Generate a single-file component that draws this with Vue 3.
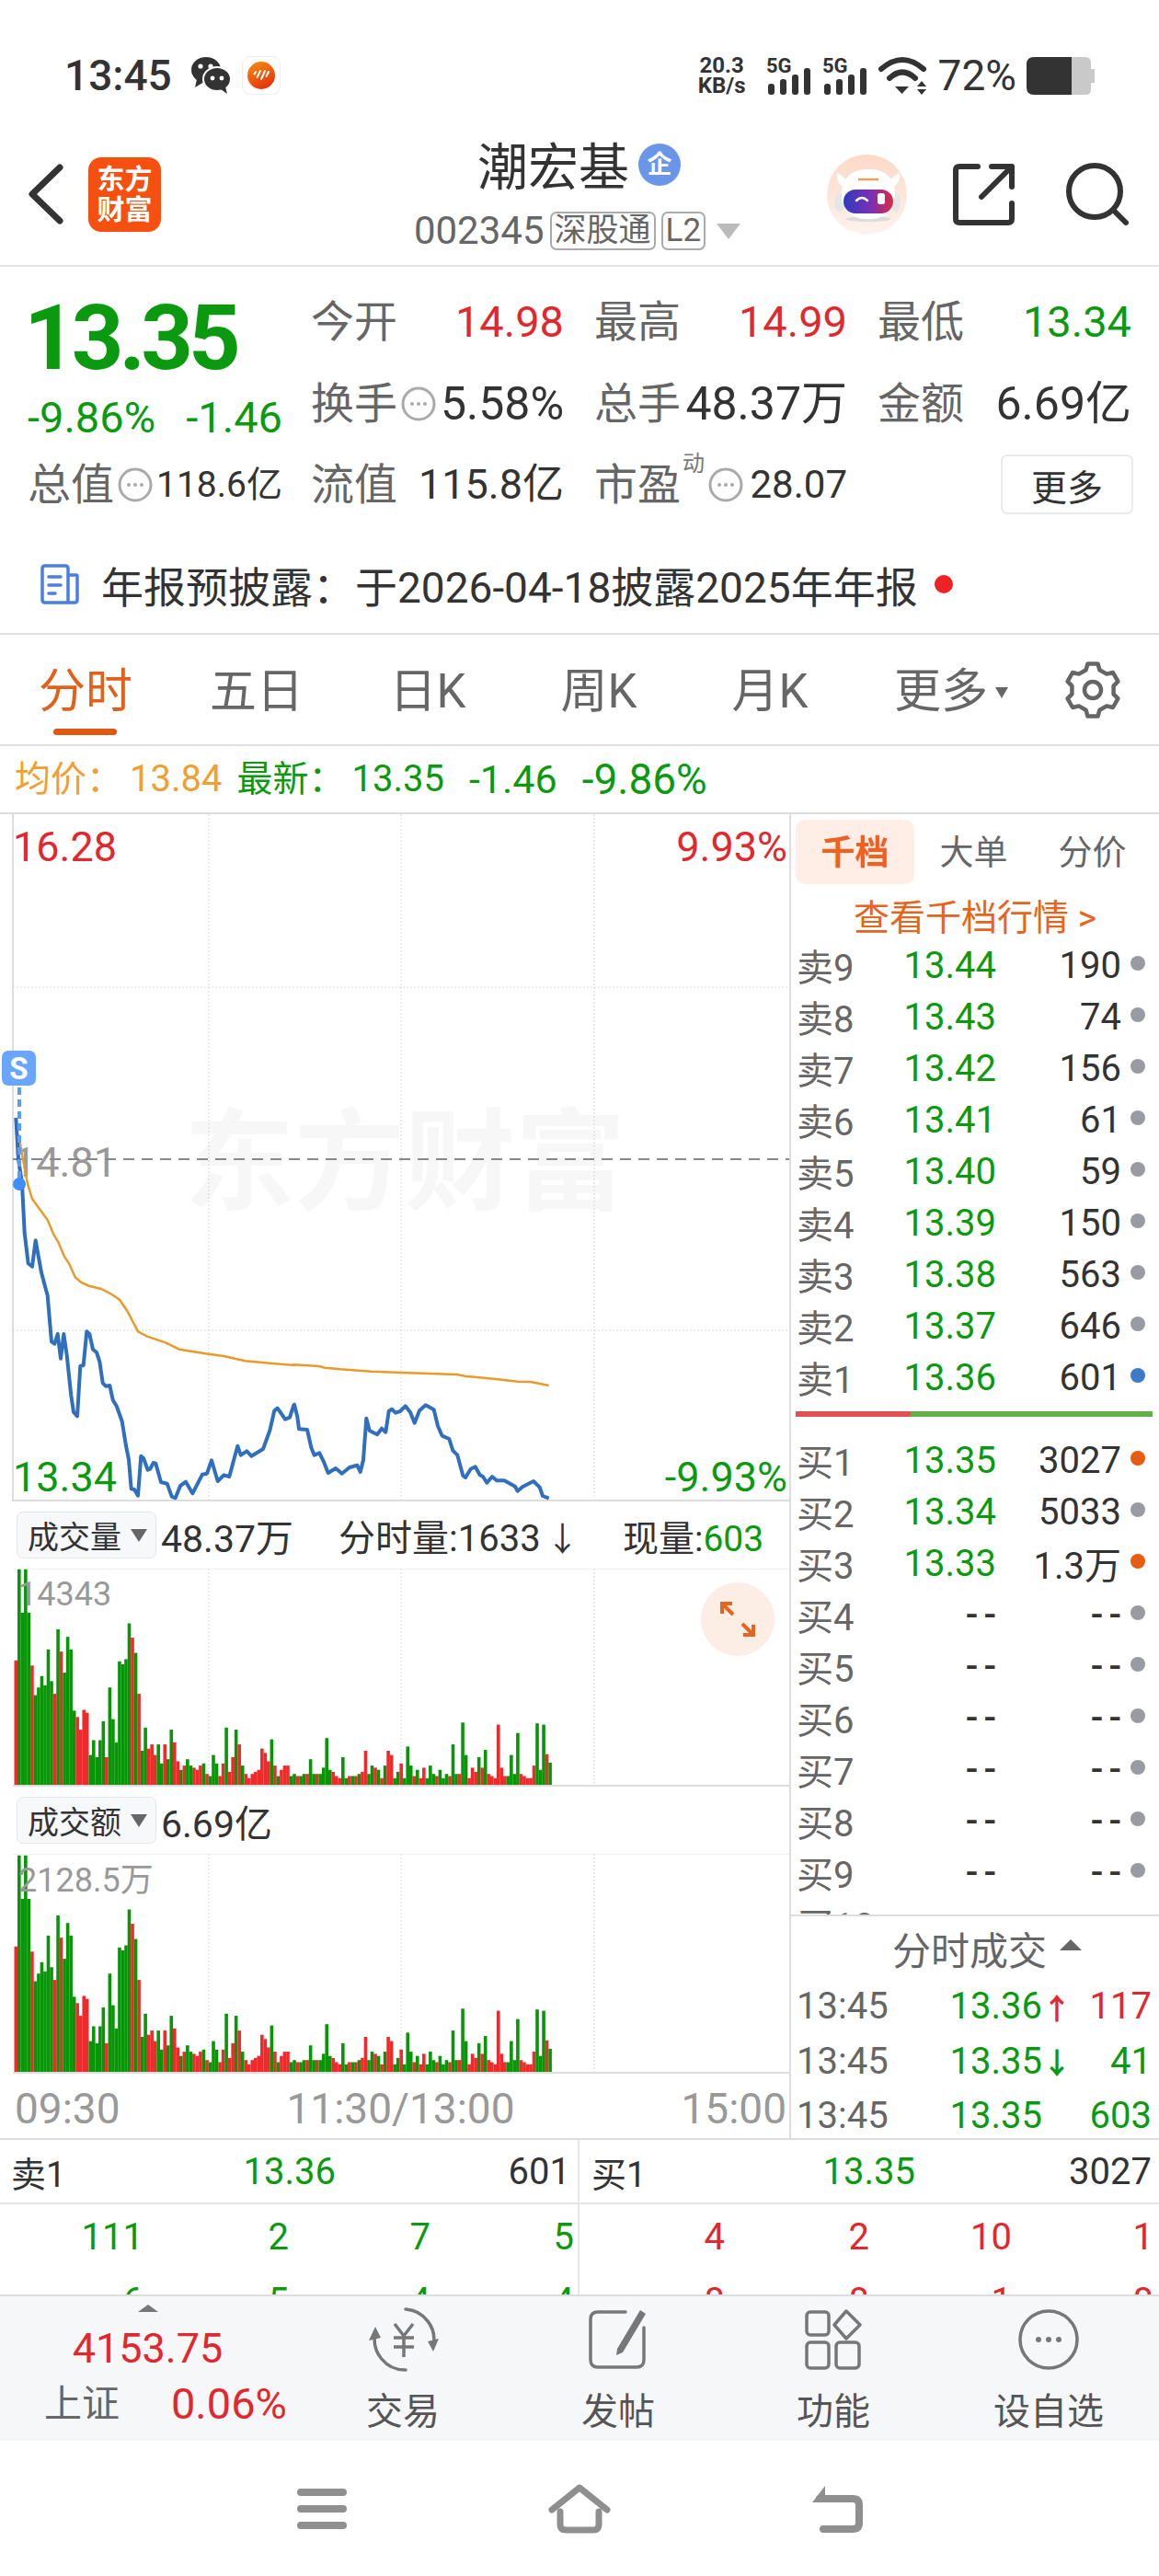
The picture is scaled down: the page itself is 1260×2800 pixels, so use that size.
<template>
  <div class="app">
    <div class="status">
      <span class="status__time">13:45</span>
      <svg class="status__wechat" width="46" height="44" viewBox="0 0 46 44">
        <ellipse cx="17" cy="16" rx="16" ry="14" fill="#333" />
        <path d="M7 26 L5 35 L15 29 Z" fill="#333" />
        <ellipse cx="29" cy="26" rx="15" ry="13" fill="#333" stroke="#fff" stroke-width="2" />
        <path d="M33 37 L40 42 L38 34 Z" fill="#333" />
        <circle cx="11" cy="12" r="2.6" fill="#fff" />
        <circle cx="22" cy="12" r="2.6" fill="#fff" />
        <circle cx="24" cy="25" r="2.4" fill="#fff" />
        <circle cx="34" cy="25" r="2.4" fill="#fff" />
      </svg>
      <span class="status__app">
        <svg width="30" height="30" viewBox="0 0 30 30">
          <defs>
            <linearGradient id="appGrad" x1="0.2" y1="0" x2="0.7" y2="1">
              <stop offset="0" stop-color="#f58a0c" />
              <stop offset="1" stop-color="#e4300f" />
            </linearGradient>
          </defs>
          <circle cx="15" cy="15" r="15" fill="url(#appGrad)" />
          <path d="M9 11 L7.5 13.5 M14 10 L10.5 17 M19 10 L15 19 M23 11 L20.5 16" stroke="#fff" stroke-width="2" stroke-linecap="round" />
        </svg>
      </span>
      <div class="status__right">
        <div class="speed"><span>20.3</span><span>KB/s</span></div>
        <svg v-for="n in 2" :key="n" class="signal" width="50" height="42" viewBox="0 0 50 42">
          <text x="0" y="18" class="signal-text">5G</text>
          <rect x="2" y="30" width="7" height="12" rx="3" fill="#333" />
          <rect x="15" y="25" width="7" height="17" rx="3" fill="#333" />
          <rect x="28" y="20" width="7" height="22" rx="3" fill="#333" />
          <rect x="41" y="13" width="7" height="29" rx="3" fill="#333" />
        </svg>
        <svg width="54" height="42" viewBox="0 0 54 42">
          <path d="M3 14 Q26 -6 49 14" fill="none" stroke="#333" stroke-width="6" stroke-linecap="round" />
          <path d="M12 24 Q26 11 40 24" fill="none" stroke="#333" stroke-width="6" stroke-linecap="round" />
          <path d="M18 33 H33 L25.500 41 Z" fill="#333" />
          <path d="M42 33 L47 27 L52 33 Z M42 36 H52 L47 42 Z" fill="#333" />
        </svg>
        <span class="status__pct">72%</span>
        <svg width="74" height="41" viewBox="0 0 74 41">
          <path d="M49 0 H64 Q70 0 70 6 V13 H74 V28 H70 V35 Q70 41 64 41 H49 Z" fill="#c9c9c9" />
          <path d="M49 0 H8 Q0 0 0 8 V33 Q0 41 8 41 H49 Z" fill="#333" />
        </svg>
      </div>
    </div>

    <div class="header">
      <div class="header__left">
        <svg width="40" height="66" viewBox="0 0 40 66">
          <path d="M35 4 L5 33 L35 62" fill="none" stroke="#333" stroke-width="7" stroke-linecap="round" stroke-linejoin="round" />
        </svg>
        <div class="logo">东方<br />财富</div>
      </div>
      <div class="header__center">
        <div class="title">
          <span>潮宏基</span>
          <span class="title__badge">企</span>
        </div>
        <div class="code">
          <span class="code__num">002345</span>
          <span class="code__tag">深股通</span>
          <span class="code__tag">L2</span>
          <span class="code__arrow"></span>
        </div>
      </div>
      <div class="header__right">
        <svg width="87" height="87" viewBox="0 0 87 87">
          <defs>
            <linearGradient id="avatarBg" x1="0" y1="0" x2="0" y2="1">
              <stop offset="0" stop-color="#fcd9c7" />
              <stop offset="1" stop-color="#fdf3ee" />
            </linearGradient>
            <linearGradient id="visor" x1="0" y1="0" x2="1" y2="0">
              <stop offset="0" stop-color="#2f3cc0" />
              <stop offset="0.55" stop-color="#7a2fb5" />
              <stop offset="1" stop-color="#dc2b42" />
            </linearGradient>
          </defs>
          <circle cx="43.500" cy="43.500" r="43.500" fill="url(#avatarBg)" />
          <path d="M11 19 Q9 32 20 37 L24 29 Z M79 19 Q81 32 70 37 L66 29 Z" fill="#fff" stroke="#ececec" />
          <ellipse cx="14" cy="52" rx="6" ry="10" fill="#e6e6e6" />
          <ellipse cx="75" cy="52" rx="5" ry="10" fill="#e6e6e6" />
          <ellipse cx="45" cy="70" rx="24" ry="3" fill="#dcdcdc" />
          <rect x="16" y="16" width="58" height="54" rx="25" fill="#fff" />
          <path d="M34 27 H56" stroke="#e9a05a" stroke-width="2.500" />
          <rect x="18" y="38" width="54" height="26" rx="13" fill="url(#visor)" />
          <path d="M32 50 Q38 44 44 50" fill="none" stroke="#fff" stroke-width="2.500" stroke-linecap="round" />
          <rect x="55" y="42" width="8" height="12" rx="2.500" fill="#fff" />
        </svg>
        <svg class="icon-share" width="67" height="67" viewBox="0 0 67 67">
          <path d="M27 3 H7 Q3 3 3 7 V60 Q3 64 7 64 H60 Q64 64 64 60 V43 M42 3 H64 V25 M64 3 L31 36" fill="none" stroke="#333" stroke-width="6" stroke-linecap="round" stroke-linejoin="round" />
        </svg>
        <svg width="68" height="70" viewBox="0 0 68 70">
          <circle cx="31" cy="32" r="28" fill="none" stroke="#333" stroke-width="6" />
          <path d="M52 53 L65 66" stroke="#333" stroke-width="6" stroke-linecap="round" />
        </svg>
      </div>
    </div>

    <div class="quote">
      <div class="quote__main">
        <div class="quote__price">13.35</div>
        <div class="quote__change"><span>-9.86%</span><span>-1.46</span></div>
      </div>
      <div class="cell">
        <span class="cell__label">今开</span><span class="cell__val up">14.98</span>
      </div>
      <div class="cell">
        <span class="cell__label">最高</span><span class="cell__val up">14.99</span>
      </div>
      <div class="cell cell--last">
        <span class="cell__label">最低</span><span class="cell__val down">13.34</span>
      </div>
      <div class="cell">
        <span class="cell__label">换手<svg class="info" viewBox="0 0 38 38"><circle cx="19" cy="19" r="17" /><circle class="info__dot" cx="12" cy="19" r="2" /><circle class="info__dot" cx="19" cy="19" r="2" /><circle class="info__dot" cx="26" cy="19" r="2" /></svg></span>
        <span class="cell__val cell__val--lg">5.58%</span>
      </div>
      <div class="cell">
        <span class="cell__label">总手</span><span class="cell__val cell__val--lg">48.37万</span>
      </div>
      <div class="cell cell--last">
        <span class="cell__label">金额</span><span class="cell__val cell__val--lg">6.69亿</span>
      </div>
      <div class="cell cell--first">
        <span class="cell__label">总值<svg class="info" viewBox="0 0 38 38"><circle cx="19" cy="19" r="17" /><circle class="info__dot" cx="12" cy="19" r="2" /><circle class="info__dot" cx="19" cy="19" r="2" /><circle class="info__dot" cx="26" cy="19" r="2" /></svg></span>
        <span class="cell__val cell__val--sm">118.6亿</span>
      </div>
      <div class="cell">
        <span class="cell__label">流值</span><span class="cell__val cell__val--md">115.8亿</span>
      </div>
      <div class="cell">
        <span class="cell__label">市盈<sup class="cell__sup">动</sup><svg class="info" viewBox="0 0 38 38"><circle cx="19" cy="19" r="17" /><circle class="info__dot" cx="12" cy="19" r="2" /><circle class="info__dot" cx="19" cy="19" r="2" /><circle class="info__dot" cx="26" cy="19" r="2" /></svg></span>
        <span class="cell__val cell__val--pe">28.07</span>
      </div>
      <div class="cell cell--last cell--btn"><span class="more-btn">更多</span></div>
    </div>

    <div class="notice">
      <svg width="42" height="44" viewBox="0 0 42 44">
        <path d="M30 12 H39 Q40 12 40 14 V39 Q40 42 37 42 H5 Q2 42 2 39 V5 Q2 2 5 2 H27 Q30 2 30 5 V42" fill="none" stroke="#4a7ee0" stroke-width="3.500" />
        <path d="M9 14 H22 M9 23 H22 M9 32 H16" stroke="#4a7ee0" stroke-width="3.500" stroke-linecap="round" />
      </svg>
      <span class="notice__text">年报预披露：于2026-04-18披露2025年年报</span>
      <span class="notice__dot"></span>
    </div>

    <div class="tabs">
      <span v-for="(t, i) in tabs" :key="t" class="tab" :class="{ 'tab--active': i === 0 }">{{ t }}</span>
      <span class="tab">更多<i class="tab__arrow"></i></span>
      <svg class="gear" width="60" height="62" viewBox="0 0 60 62">
        <path :d="gearPath" fill="none" stroke="#666" stroke-width="4.500" stroke-linejoin="round" />
        <circle cx="30" cy="31" r="9" fill="none" stroke="#666" stroke-width="4.500" />
      </svg>
    </div>

    <div class="latest">
      <span class="latest__avg">均价：</span><span class="latest__avg latest__num">13.84</span>
      <span class="latest__item latest__head">最新：</span><span class="latest__item latest__num">13.35</span>
      <span class="latest__item latest__gap">-1.46</span>
      <span class="latest__item latest__gap latest__pct">-9.86%</span>
    </div>

    <div class="board">
      <div class="board__left">
        <svg class="chart" width="858" height="747" viewBox="0 885 858 747">
          <text x="200" y="1306" class="watermark">东方财富</text>
          <path v-for="x in gridX" :key="x" :d="`M${x} 885 V1632`" class="grid" />
          <path d="M14 1073 H858 M14 1446 H858" class="grid" />
          <path d="M14 885 V1632" class="axis" />
          <path d="M14 1631 H858" class="axis" />
          <text x="14" y="936" class="label up-fill">16.28</text>
          <text x="856" y="936" class="label label--end up-fill">9.93%</text>
          <text x="14" y="1279" class="label label--grey">14.81</text>
          <text x="14" y="1621" class="label down-fill">13.34</text>
          <text x="856" y="1621" class="label label--end down-fill">-9.93%</text>
          <path d="M14 1260 H858" class="mid" />
          <polyline :points="avgLine" class="line-avg" />
          <polyline :points="priceLine" class="line-price" />
          <path d="M21 1182 V1287" class="marker-line" />
          <circle cx="21" cy="1287" r="7" class="marker-dot" />
          <rect x="2" y="1142" width="37" height="38" rx="7" class="marker-dot marker-box" />
          <text x="20.500" y="1173" class="marker-s">S</text>
        </svg>

        <div class="vol-head">
          <span class="select">成交量<i class="select__arrow"></i></span>
          <span class="vol-head__val">48.37万</span>
          <span class="vol-head__fen">分时量:1633<i class="vol-head__dir">↓</i></span>
          <span class="vol-head__now">现量:<em>603</em></span>
        </div>
        <svg class="chart" width="858" height="237" viewBox="0 1705 858 237">
          <path v-for="x in gridX" :key="x" :d="`M${x} 1705 V1942`" class="grid" />
          <path d="M14 1705 H858" class="hair" />
          <rect v-for="b in bars" :key="b.x" :x="b.x" :y="1942 - b.h" width="3.600" :height="b.h" :fill="b.c" />
          <path d="M14 1941 H858" class="axis" />
          <text x="20" y="1745" class="small-label">14343</text>
          <circle cx="802" cy="1760" r="40" fill="#fdeee5" />
          <path d="M785 1754 V1743 H796 M785 1743 L797 1755 M819 1766 V1777 H808 M819 1777 L807 1765" fill="none" stroke="#e4651f" stroke-width="4" />
        </svg>

        <div class="vol-head">
          <span class="select">成交额<i class="select__arrow"></i></span>
          <span class="vol-head__val">6.69亿</span>
        </div>
        <svg class="chart" width="858" height="239" viewBox="0 2015 858 239">
          <path v-for="x in gridX" :key="x" :d="`M${x} 2015 V2253`" class="grid" />
          <path d="M14 2015 H858" class="hair" />
          <rect v-for="b in bars" :key="b.x" :x="b.x" :y="2253 - b.h" width="3.600" :height="b.h" :fill="b.c" />
          <path d="M14 2253 H858" class="axis" />
          <text x="20" y="2056" class="small-label">2128.5万</text>
        </svg>

        <div class="times"><span>09:30</span><span>11:30/13:00</span><span>15:00</span></div>
      </div>

      <div class="board__right">
        <div class="book">
          <div class="book__tabs">
            <span class="book__tab book__tab--active">千档</span>
            <span class="book__tab">大单</span>
            <span class="book__tab">分价</span>
          </div>
          <div class="book__link">查看千档行情 &gt;</div>
          <div v-for="r in asks" :key="r.label" class="level">
            <span class="level__label">{{ r.label }}</span>
            <span class="level__price" :class="{ 'level__empty': r.price === '--' }">{{ r.price }}</span>
            <span class="level__qty" :class="{ 'level__empty': r.qty === '--' }">{{ r.qty }}</span>
            <i class="level__dot" :class="r.dot"></i>
          </div>
          <div class="ratio"></div>
          <div v-for="r in bids" :key="r.label" class="level">
            <span class="level__label">{{ r.label }}</span>
            <span class="level__price" :class="{ 'level__empty': r.price === '--' }">{{ r.price }}</span>
            <span class="level__qty" :class="{ 'level__empty': r.qty === '--' }">{{ r.qty }}</span>
            <i class="level__dot" :class="r.dot"></i>
          </div>
        </div>
        <div class="trades">
          <div class="trades__title">分时成交<i class="trades__arrow"></i></div>
          <div v-for="(t, i) in trades" :key="i" class="trade">
            <span class="trade__time">13:45</span>
            <span class="trade__price">{{ t.price }}</span>
            <span class="trade__dir" :class="t.cls">{{ t.dir }}</span>
            <span class="trade__qty" :class="t.cls">{{ t.qty }}</span>
          </div>
        </div>
      </div>
    </div>

    <div class="detail">
      <div class="detail__side">
        <div class="detail__top">
          <span>卖1</span><span class="down">13.36</span><span>601</span>
        </div>
        <div v-for="(row, i) in sellRows" :key="i" class="detail__row down">
          <span v-for="(n, j) in row" :key="j">{{ n }}</span>
        </div>
      </div>
      <div class="detail__side detail__side--right">
        <div class="detail__top">
          <span>买1</span><span class="down">13.35</span><span>3027</span>
        </div>
        <div v-for="(row, i) in buyRows" :key="i" class="detail__row up">
          <span v-for="(n, j) in row" :key="j">{{ n }}</span>
        </div>
      </div>
    </div>

    <div class="dock">
      <div class="index">
        <i class="index__arrow"></i>
        <span class="index__val">4153.75</span>
        <div class="index__sub"><span>上证</span><span class="up">0.06%</span></div>
      </div>
      <div class="dock__item">
        <svg width="82" height="70" viewBox="0 0 82 70">
          <path d="M44 2 A33 33 0 0 1 74 42 M44 68 A33 33 0 0 1 11 28" fill="none" stroke="#777" stroke-width="3.500" stroke-linecap="round" />
          <path d="M74 48 L80 34 L68 37 Z M11 21 L4 36 L17 33 Z" fill="#777" />
          <path d="M32 18 L42 31 L52 18 M42 31 V54 M31 33 H53 M31 43 H53" fill="none" stroke="#777" stroke-width="3.500" />
        </svg>
        <span>交易</span>
      </div>
      <div class="dock__item">
        <svg width="66" height="70" viewBox="0 0 66 70">
          <path d="M41 5 H11 Q3 5 3 13 V57 Q3 65 11 65 H53 Q61 65 61 57 V22" fill="none" stroke="#777" stroke-width="3.500" stroke-linecap="round" />
          <path d="M57 3 L63 7 L38 49 L31 52 L32 45 Z" fill="#777" />
        </svg>
        <span>发帖</span>
      </div>
      <div class="dock__item">
        <svg width="62" height="70" viewBox="0 0 62 70">
          <g fill="none" stroke="#777" stroke-width="3.500">
            <rect x="2" y="5" width="24" height="25" rx="4" />
            <path d="M45 4 L60 19 L45 34 L32 19 Z" stroke-linejoin="round" />
            <rect x="2" y="38" width="24" height="28" rx="4" />
            <rect x="34" y="38" width="25" height="28" rx="4" />
          </g>
        </svg>
        <span>功能</span>
      </div>
      <div class="dock__item">
        <svg width="66" height="70" viewBox="0 0 66 70">
          <circle cx="33" cy="35" r="31" fill="none" stroke="#777" stroke-width="3.500" />
          <circle cx="22" cy="35" r="3" fill="#777" />
          <circle cx="33" cy="35" r="3" fill="#777" />
          <circle cx="44" cy="35" r="3" fill="#777" />
        </svg>
        <span>设自选</span>
      </div>
    </div>

    <div class="nav">
      <svg width="54" height="44" viewBox="0 0 54 44">
        <path d="M4 4 H50 M4 22 H50 M4 40 H50" stroke="#8f8f8f" stroke-width="8" stroke-linecap="round" />
      </svg>
      <svg width="68" height="54" viewBox="0 0 68 54">
        <path d="M4 28 L34 4 L64 28 M13 30 V44 Q13 50 19 50 H49 Q55 50 55 44 V30" fill="none" stroke="#8f8f8f" stroke-width="7" stroke-linecap="round" stroke-linejoin="round" />
      </svg>
      <svg width="58" height="54" viewBox="0 0 58 54">
        <path d="M10 16 H46 Q53 16 53 23 V42 Q53 49 46 49 H14" fill="none" stroke="#8f8f8f" stroke-width="8" stroke-linecap="round" />
        <path d="M16 2 V20 H2 Z" fill="#8f8f8f" />
      </svg>
    </div>
  </div>
</template>

<script setup>
const tabs = ['分时', '五日', '日K', '周K', '月K']
const gridX = [227, 436, 646]

// 折线坐标是从截图量出来的，z8 / z9 是两段放大区域的原始读数
const z8 = [
  [52, 285], [60, 420], [72, 500], [80, 660], [92, 760], [105, 770], [116, 685], [135, 790], [155, 865],
  [168, 1015], [178, 1022], [188, 990], [198, 1070], [208, 990], [218, 1060], [232, 1190], [240, 1245],
  [252, 1258], [262, 1095], [272, 1092], [283, 982], [292, 990], [303, 1040], [315, 1050], [325, 1080],
  [335, 1150], [345, 1160], [358, 1158], [368, 1205], [380, 1225], [398, 1275], [410, 1350], [420, 1400],
  [428, 1495], [438, 1497], [450, 1517], [460, 1388], [468, 1395], [482, 1433], [490, 1430], [500, 1410],
  [508, 1412], [525, 1473], [545, 1478], [560, 1520], [572, 1525], [588, 1485], [606, 1472], [628, 1510],
  [660, 1448], [675, 1445], [690, 1402], [710, 1470], [730, 1450], [748, 1455], [775, 1355], [785, 1385],
  [805, 1372], [820, 1388], [858, 1365], [880, 1305], [895, 1240], [905, 1232], [930, 1268], [945, 1262],
  [958, 1222],
]
const z9 = [
  [0, 380], [10, 420], [15, 460], [42, 462], [55, 520], [65, 545], [82, 538], [95, 565], [110, 603],
  [135, 588], [155, 605], [180, 585], [205, 578], [215, 600], [225, 560], [235, 425], [245, 465], [270, 478],
  [285, 458], [298, 470], [308, 402], [318, 395], [330, 407], [345, 402], [362, 385], [378, 405], [392, 440],
  [408, 400], [428, 382], [455, 397], [468, 450], [482, 482], [505, 492], [517, 530], [532, 545], [550, 612],
  [558, 618], [575, 590], [590, 583], [605, 610], [615, 615], [628, 635], [645, 615], [660, 628], [685, 628],
  [720, 647], [728, 662], [745, 648], [780, 630], [800, 650], [810, 678], [830, 686],
]
const avg8 = [
  [60, 340], [75, 420], [90, 500], [105, 550], [120, 570], [155, 618], [175, 665], [190, 690], [210, 738],
  [225, 760], [245, 805], [265, 822], [290, 833], [330, 843], [360, 858], [390, 878], [415, 915], [450, 982],
  [480, 998], [540, 1018], [585, 1040], [680, 1055], [730, 1062], [800, 1078], [880, 1085], [960, 1092],
]
const avg9 = [
  [0, 250], [80, 255], [100, 260], [150, 265], [250, 272], [350, 276], [530, 282], [560, 288], [650, 296],
  [730, 305], [770, 306], [830, 318],
]

const toPoints = (list8, list9) =>
  [
    ...list8.map(([x, y]) => `${(x / 3).toFixed(1)},${(1120 + y / 3).toFixed(1)}`),
    ...list9.map(([x, y]) => `${(320 + x / 3).toFixed(1)},${(1400 + y / 3).toFixed(1)}`),
  ].join(' ')

const priceLine = toPoints(z8, z9)
const avgLine = toPoints(avg8, avg9)

// 正数绿柱，负数红柱
const volumes = [
  -299, 515, 412, 515, 412, -287, 217, 235, 262, 240, 325, 250, -220, 373, -320, 270, 355, 325, 180, -165,
  -135, -182, -175, 75, 110, 70, 110, 155, -70, 235, 160, 105, 297, 290, 302, 387, -353, 317, -220, 85,
  140, -90, -100, -75, 100, 55, -100, 65, 135, -105, -60, 40, -50, 65, 50, -45, -40, -50, 55, -30,
  25, 75, 55, -25, -55, 140, -35, -70, 135, -100, 50, -30, -20, -30, -35, -40, -90, -80, -60, 112,
  -50, 25, -40, -50, -50, 25, 30, -25, 25, 30, -30, 65, 30, -30, 30, 45, 115, 40, -35, -25,
  -20, 70, 20, -25, 25, -25, 30, -35, -85, 30, 50, -45, 40, -20, 50, -85, -75, 20, 35, -55,
  20, 95, 50, -25, 40, -20, -45, 20, 50, 30, -25, 40, 20, 30, -25, 100, 30, -30, 152, 75,
  -20, -45, -35, 70, -45, 87, -30, -25, -20, -147, -45, -25, 25, 75, 30, 127, -30, -25, -20, -20,
  -50, 150, 40, 147, -77, 57,
]
const bars = volumes.map((v, i) => ({
  x: +(15.5 + i * 3.52).toFixed(2),
  h: +(Math.abs(v) / 2.18).toFixed(1),
  c: v > 0 ? '#089608' : '#ee2a2a',
}))

const gearPath = (() => {
  const pts = []
  for (let i = 0; i < 6; i++) {
    const a = -90 + i * 60
    for (const [off, r] of [[-19, 23], [-11, 29], [11, 29], [19, 23]]) {
      const rad = ((a + off) * Math.PI) / 180
      pts.push(`${(30 + r * Math.cos(rad)).toFixed(1)} ${(31 + r * Math.sin(rad)).toFixed(1)}`)
    }
  }
  return `M${pts.join(' L')} Z`
})()

const asks = [
  ['卖9', '13.44', '190'],
  ['卖8', '13.43', '74'],
  ['卖7', '13.42', '156'],
  ['卖6', '13.41', '61'],
  ['卖5', '13.40', '59'],
  ['卖4', '13.39', '150'],
  ['卖3', '13.38', '563'],
  ['卖2', '13.37', '646'],
  ['卖1', '13.36', '601', 'level__dot--blue'],
].map(([label, price, qty, dot]) => ({ label, price, qty, dot }))

const bids = [
  ['买1', '13.35', '3027', 'level__dot--orange'],
  ['买2', '13.34', '5033'],
  ['买3', '13.33', '1.3万', 'level__dot--orange'],
  ['买4', '--', '--'],
  ['买5', '--', '--'],
  ['买6', '--', '--'],
  ['买7', '--', '--'],
  ['买8', '--', '--'],
  ['买9', '--', '--'],
  ['买10', '--', '--'],
].map(([label, price, qty, dot]) => ({ label, price, qty, dot }))

const trades = [
  { price: '13.36', dir: '↑', qty: '117', cls: 'up' },
  { price: '13.35', dir: '↓', qty: '41', cls: 'down' },
  { price: '13.35', dir: '', qty: '603', cls: 'down' },
]

const sellRows = [
  [111, 2, 7, 5],
  [6, 5, 4, 4],
]
const buyRows = [
  [4, 2, 10, 1],
  [8, 8, 1, 8],
]
</script>

<style>
html,
body {
  margin: 0;
  background: #fff;
}
</style>

<style scoped>
.app {
  width: 1260px;
  height: 2800px;
  overflow: hidden;
  background: #fff;
  color: #333;
  font-family: Roboto, 'Noto Sans CJK SC', sans-serif;
}
.up {
  color: #e0282e;
}
.down {
  color: #0b9a0f;
}

/* 状态栏 */
.status {
  display: flex;
  align-items: center;
  height: 44px;
  padding: 60px 70px 36px 70px;
}
.status__time {
  font-size: 46px;
  font-weight: 500;
  line-height: 44px;
  width: 137px;
}
.status__app {
  display: flex;
  align-items: center;
  justify-content: center;
  width: 40px;
  height: 40px;
  margin-left: 10px;
  border: 1px solid #eee;
  border-radius: 9px;
}
.status__right {
  display: flex;
  align-items: center;
  gap: 11px;
  margin-left: auto;
}
.speed {
  display: flex;
  flex-direction: column;
  align-items: center;
  width: 54px;
  margin-right: 10px;
  font-size: 24px;
  font-weight: 700;
  line-height: 22px;
}
.signal {
  overflow: visible;
}
.signal-text {
  font-size: 22px;
  font-weight: 700;
  fill: #333;
}
.status__pct {
  font-size: 46px;
  line-height: 44px;
}

/* 标题栏 */
.header {
  display: grid;
  grid-template-columns: 447px 361px 1fr;
  height: 150px;
  box-sizing: border-box;
  border-bottom: 2px solid #e4e4e4;
}
.header__left {
  display: flex;
  align-items: center;
  gap: 26px;
  padding: 0 0 6px 30px;
}
.logo {
  width: 79px;
  height: 81px;
  box-sizing: border-box;
  padding-top: 7px;
  background: #f5500f;
  border-radius: 14px;
  color: #fff;
  font-size: 30px;
  font-weight: 700;
  line-height: 33px;
  text-align: center;
}
.header__center {
  display: flex;
  flex-direction: column;
  align-items: center;
  padding-top: 15px;
}
.title {
  display: flex;
  align-items: center;
  gap: 10px;
  height: 54px;
  margin-left: 4px;
  color: #333;
  font-size: 55px;
  line-height: 54px;
}
.title__badge {
  display: flex;
  align-items: center;
  justify-content: center;
  width: 46px;
  height: 46px;
  margin-top: -6px;
  background: #6a96ea;
  border-radius: 50%;
  color: #fff;
  font-size: 27px;
  font-weight: 700;
  line-height: 1;
}
.code {
  display: flex;
  align-items: center;
  gap: 6px;
  margin-top: 21px;
  height: 42px;
  white-space: nowrap;
}
.code > span {
  flex: none;
}
.code__num {
  color: #666;
  font-size: 42px;
  line-height: 42px;
}
.code__tag {
  padding: 0 3px;
  border: 2px solid #aaa;
  border-radius: 7px;
  color: #666;
  font-size: 35px;
  line-height: 38px;
}
.code__arrow {
  width: 0;
  height: 0;
  margin-left: 6px;
  border-top: 17px solid #bbb;
  border-left: 13px solid transparent;
  border-right: 13px solid transparent;
}
.header__right {
  display: flex;
  align-items: center;
  justify-content: flex-end;
  padding: 0 33px 6px 0;
  gap: 50px;
}
.header__right svg:nth-child(3) {
  margin-left: 6px;
}

/* 行情 */
.quote {
  display: grid;
  grid-template-columns: 308px 308px 308px 276px;
  grid-template-rows: 90px 88px 87px;
  padding: 15px 30px 0;
}
.quote__main {
  grid-row: span 2;
}
.quote__price {
  margin: 12px 0 0 -4px;
  color: #0b9a0f;
  font-size: 99px;
  font-weight: 700;
  letter-spacing: -5px;
  line-height: 100px;
}
.quote__change {
  display: flex;
  justify-content: space-between;
  width: 277px;
  margin-top: 12px;
  color: #0b9a0f;
  font-size: 47px;
  line-height: 50px;
}
.cell {
  display: flex;
  align-items: center;
  justify-content: space-between;
  padding-right: 33px;
}
.cell--first {
  padding-right: 31px;
}
.cell--last {
  padding-right: 0;
}
.cell--btn {
  justify-content: flex-end;
}
.cell__label {
  display: flex;
  align-items: center;
  color: #666;
  font-size: 47px;
  line-height: 56px;
  position: relative;
  white-space: nowrap;
}
.cell__sup {
  position: absolute;
  left: 96px;
  top: -8px;
  color: #777;
  font-size: 24px;
  line-height: 26px;
}
.cell__val {
  color: #333;
  font-size: 47px;
  line-height: 56px;
  white-space: nowrap;
}
.cell__val--lg {
  font-size: 50px;
}
.cell__val--md {
  font-size: 45px;
}
.cell__val--pe {
  font-size: 42px;
}
.cell__val--sm {
  font-size: 39px;
}
.cell__val.up {
  color: #e0282e;
}
.cell__val.down {
  color: #0b9a0f;
}
.info {
  width: 38px;
  height: 38px;
  margin-left: 4px;
  fill: none;
  stroke: #aaa;
  stroke-width: 3;
}
.cell__sup + .info {
  margin-left: 30px;
}
.info__dot {
  fill: #aaa;
  stroke: none;
}
.more-btn {
  display: flex;
  align-items: center;
  justify-content: center;
  width: 144px;
  height: 65px;
  box-sizing: border-box;
  margin-right: -2px;
  border: 2px solid #eaeaea;
  border-radius: 7px;
  color: #333;
  font-size: 39px;
}
.notice {
  display: flex;
  align-items: center;
  height: 120px;
  box-sizing: border-box;
  padding: 12px 0 0 44px;
  border-bottom: 2px solid #e0e0e0;
}
.notice__text {
  margin-left: 24px;
  color: #333;
  font-size: 46px;
  white-space: nowrap;
}
.notice__dot {
  width: 20px;
  height: 20px;
  margin-left: 18px;
  background: #ee2222;
  border-radius: 50%;
}

/* 周期 tab */
.tabs {
  display: grid;
  grid-template-columns: repeat(6, 186px) 144px;
  align-items: center;
  height: 121px;
  box-sizing: border-box;
  padding-top: 4px;
  border-bottom: 2px solid #e0e0e0;
}
.tab {
  position: relative;
  color: #666;
  font-size: 51px;
  line-height: 60px;
  text-align: center;
}
.tab--active {
  color: #e2601a;
}
.tab--active::after {
  content: '';
  position: absolute;
  left: 58px;
  right: 59px;
  bottom: -17px;
  height: 7px;
  background: #e0580f;
  border-radius: 4px;
}
.tab__arrow {
  display: inline-block;
  width: 0;
  height: 0;
  margin: 0 -22px 0 8px;
  vertical-align: 10px;
  border-top: 12px solid #666;
  border-left: 7px solid transparent;
  border-right: 7px solid transparent;
}
.gear {
  justify-self: center;
  margin-top: -4px;
}
.latest {
  display: flex;
  align-items: center;
  height: 72px;
  box-sizing: border-box;
  padding-left: 16px;
  font-size: 39px;
  line-height: 72px;
}
.latest__avg {
  color: #f0a030;
}
.latest__item {
  color: #0b9a0f;
}
.latest__num {
  margin-left: 8px;
  font-size: 40px;
}
.latest__head {
  margin-left: 16px;
}
.latest__gap {
  margin-left: 27px;
  font-size: 43px;
}
.latest__pct {
  font-size: 46px;
}

/* 图表区 */
.board {
  display: flex;
  height: 1443px;
  border-top: 2px solid #ddd;
  border-bottom: 2px solid #ddd;
  box-sizing: border-box;
}
.board__left {
  width: 860px;
  box-sizing: border-box;
  border-right: 2px solid #ddd;
}
.board__right {
  width: 400px;
}
.chart {
  display: block;
}
.watermark {
  fill: #f7f7f7;
  font-size: 120px;
  font-weight: 700;
}
.grid {
  fill: none;
  stroke: #d8d8d8;
  stroke-width: 1;
  stroke-dasharray: 2 2;
}
.axis {
  stroke: #ddd;
  stroke-width: 2;
}
.hair {
  stroke: #e4e4e4;
  stroke-width: 1;
}
.mid {
  stroke: #888;
  stroke-width: 2;
  stroke-dasharray: 12 8;
}
.label {
  font-size: 45px;
}
.label--end {
  text-anchor: end;
}
.label--grey {
  fill: #999;
}
.up-fill {
  fill: #e0282e;
}
.down-fill {
  fill: #0b9a0f;
}
.line-avg {
  fill: none;
  stroke: #ea9a2a;
  stroke-width: 2.500;
}
.line-price {
  fill: none;
  stroke: #2f6fbd;
  stroke-width: 4;
  stroke-linejoin: round;
}
.marker-line {
  stroke: #5b9cf0;
  stroke-width: 4;
  stroke-dasharray: 8 5;
}
.marker-dot {
  fill: #3f8ef7;
}
.marker-box {
  fill: #6aa6ff;
}
.marker-s {
  fill: #fff;
  font-size: 33px;
  font-weight: 700;
  text-anchor: middle;
}
.small-label {
  fill: #999;
  font-size: 36px;
}
.vol-head {
  display: flex;
  align-items: center;
  height: 73px;
  box-sizing: border-box;
  padding: 0 18px;
  color: #333;
  font-size: 41px;
}
.select {
  display: flex;
  align-items: center;
  width: 152px;
  height: 51px;
  box-sizing: border-box;
  padding-left: 11px;
  background: #f7f8fa;
  border: 1px solid #e6e6e6;
  border-radius: 7px;
  font-size: 34px;
  white-space: nowrap;
}
.select__arrow {
  width: 0;
  height: 0;
  margin-left: 10px;
  border-top: 14px solid #666;
  border-left: 9px solid transparent;
  border-right: 9px solid transparent;
}
.vol-head__val {
  margin-left: 5px;
  width: 193px;
}
.vol-head__fen {
  width: 309px;
  font-size: 40px;
  white-space: nowrap;
}
.vol-head__dir {
  margin-left: 6px;
  font-size: 36px;
  font-style: normal;
}
.vol-head__now {
  font-size: 39px;
  white-space: nowrap;
}
.vol-head__now em {
  color: #0b9a0f;
  font-style: normal;
}
.times {
  display: flex;
  align-items: center;
  justify-content: space-between;
  height: 70px;
  padding: 6px 3px 0 16px;
  box-sizing: border-box;
  color: #999;
  font-size: 46px;
}

/* 千档 */
.book {
  height: 1196px;
  overflow: hidden;
}
.book__tabs {
  display: grid;
  grid-template-columns: repeat(3, 129px);
  padding: 6px 0 0 5px;
}
.book__tab {
  height: 70px;
  color: #666;
  font-size: 37px;
  line-height: 74px;
  text-align: center;
}
.book__tab--active {
  background: #ffeee6;
  border-radius: 10px;
  color: #f0601f;
  font-weight: 700;
}
.book__link {
  height: 44px;
  padding-top: 15px;
  color: #e6651e;
  font-size: 39px;
  line-height: 44px;
  text-align: center;
  white-space: pre;
}
.level {
  display: grid;
  grid-template-columns: 72px 145px 136px 26px;
  align-items: center;
  height: 56px;
  padding-left: 6px;
  white-space: nowrap;
}
.level__label {
  color: #666;
  font-size: 40px;
}
.level__price {
  color: #0b9a0f;
  font-size: 40px;
  text-align: right;
}
.level__qty {
  color: #333;
  font-size: 40px;
  text-align: right;
}
.level__empty {
  color: #333;
  font-weight: 500;
  letter-spacing: 6px;
  margin-right: -6px;
}
.level__dot {
  justify-self: end;
  width: 16px;
  height: 16px;
  margin-top: -4px;
  background: #9a9aa2;
  border-radius: 50%;
}
.level__dot--blue {
  background: #3b7cc9;
}
.level__dot--orange {
  background: #e85c10;
}
.ratio {
  height: 6px;
  margin: 10px 7px 18px 5px;
  background: linear-gradient(100deg, #e25050 32%, #62b04a 32.500%);
}

/* 分时成交 */
.trades {
  border-top: 2px solid #ddd;
}
.trades__title {
  display: flex;
  align-items: center;
  justify-content: center;
  gap: 14px;
  height: 68px;
  padding-left: 26px;
  color: #666;
  font-size: 42px;
}
.trades__arrow {
  width: 0;
  height: 0;
  margin-bottom: 6px;
  border-bottom: 12px solid #666;
  border-left: 12px solid transparent;
  border-right: 12px solid transparent;
}
.trade {
  display: grid;
  grid-template-columns: 130px 137px 23px 96px;
  align-items: center;
  height: 59.500px;
  padding-left: 6px;
  font-size: 40px;
  white-space: nowrap;
}
.trade__time {
  color: #666;
}
.trade__price {
  color: #0b9a0f;
  text-align: right;
}
.trade__dir {
  font-size: 32px;
  font-weight: 700;
  text-align: center;
}
.trade__qty {
  text-align: right;
}

/* 买一卖一明细 */
.detail {
  display: grid;
  grid-template-columns: 630px 630px;
  height: 168px;
  overflow: hidden;
}
.detail__side {
  box-sizing: border-box;
  border-right: 2px solid #e6e6e6;
}
.detail__side--right {
  border-right: none;
}
.detail__top {
  display: grid;
  grid-template-columns: 60px 293px 255px;
  align-items: center;
  height: 68px;
  padding-left: 12px;
  border-bottom: 2px solid #e4e4e4;
  font-size: 40px;
  white-space: nowrap;
}
.detail__top span:first-child {
  font-size: 38px;
}
.detail__side--right .detail__top {
  grid-template-columns: 60px 292px 257px;
  padding-left: 13px;
}
.detail__top span + span,
.detail__row span {
  text-align: right;
}
.detail__row {
  display: grid;
  grid-template-columns: 156px 158px 154px 156px;
  align-items: center;
  height: 70px;
  font-size: 40px;
}
.detail__side--right .detail__row {
  grid-template-columns: 158px 157px 155px 154px;
}

/* 底部操作栏 */
.dock {
  display: grid;
  grid-template-columns: 321px repeat(4, 234px);
  height: 159px;
  box-sizing: border-box;
  background: #f6f7f9;
  border-top: 2px solid #ddd;
}
.index {
  display: flex;
  flex-direction: column;
  align-items: center;
}
.index__arrow {
  width: 0;
  height: 0;
  margin-top: 9px;
  border-bottom: 8px solid #777;
  border-left: 11px solid transparent;
  border-right: 11px solid transparent;
}
.index__val {
  margin-top: 15px;
  color: #e0282e;
  font-size: 45px;
  line-height: 50px;
}
.index__sub {
  display: flex;
  justify-content: space-between;
  align-self: flex-start;
  width: 264px;
  margin: 10px 0 0 48px;
  color: #666;
  font-size: 41px;
  line-height: 50px;
}
.index__sub .up {
  font-size: 47px;
}
.dock__item {
  display: flex;
  flex-direction: column;
  align-items: center;
  padding-top: 12px;
  color: #555;
  font-size: 40px;
  line-height: 46px;
}
.dock__item span {
  margin-top: 21px;
}
.nav {
  display: grid;
  grid-template-columns: repeat(3, 280px);
  justify-content: center;
  justify-items: center;
  align-items: center;
  height: 147px;
}
</style>
